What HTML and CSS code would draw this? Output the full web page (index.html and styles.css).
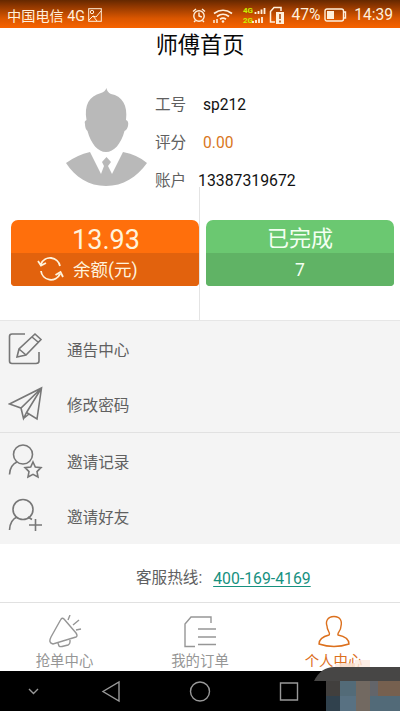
FILE: index.html
```html
<!DOCTYPE html>
<html lang="zh-CN">
<head>
<meta charset="utf-8">
<title>师傅首页</title>
<link rel="stylesheet" href="styles.css">
</head>
<body>
<div class="phone">
  <div class="status">
    <span class="carrier">中国电信 4G</span>
    <svg class="picture" width="14" height="14" viewBox="0 0 14 14"><rect x=".7" y=".7" width="12.6" height="12.6"/><circle cx="4" cy="4" r="1.7"/><path d="M1 12 5 8 8 9 13 3M5 8 9 13"/></svg>
    <svg class="signals" width="94" height="22" viewBox="0 0 94 22">
      <g stroke-width="1.4"><circle cx="8" cy="12" r="5.2"/><path d="M8 8.5V12l2.8 1M2 7.5 5 5M14 7.5 11 5M4.5 16.5 3 18M11.5 16.5 13 18"/></g>
      <g><path d="M23 9.5Q32 3 41 9.5M26 12.5Q32 8 38 12.5M29 15.2Q32 13 35 15.2" stroke-width="1.7"/><circle class="solid" cx="32" cy="17.5" r="1.3"/><path d="M23 16v3M26 15v4" stroke-width="1.5"/></g>
      <text x="52" y="9">4G</text><text x="52" y="18.500">2G</text>
      <path d="M64.500 10V8M67.500 10V7M70.500 10V5.500M73.500 10V4M62 19V17M65 19V16M68 19V14.500M71 19V13" stroke-width="1.8"/>
      <path d="M90 7V3.500H83L79.500 7.500V18H84" stroke-width="1.5"/><rect class="solid" x="85" y="8" width="8" height="12"/><path class="mark" d="M89 10v5M89 16.500v2"/>
    </svg>
    <span class="percent">47%</span>
    <svg class="battery" width="23" height="14" viewBox="0 0 23 14"><rect x="1" y="1" width="18.500" height="12" rx="2"/><path d="M20 4h1.500v6H20"/><rect class="solid" x="3" y="3" width="7" height="8"/></svg>
    <span class="clock">14:39</span>
  </div>

  <h1>师傅首页</h1>

  <section class="profile">
    <svg class="avatar" width="84" height="99" viewBox="0 0 84 99"><path d="M36 5Q40 4 41.500 0Q42 4 46 6C57 8 63 17 61 32Q64 33 63 38Q62 42 59.500 43C56 56 49 64 41 64S26 56 22.500 43Q20 41 20 36Q19 33 21.500 32C19 17 24 8 36 5ZM25 64 36 86 39 78 37 74 41.500 69 46 74 43 78 47 86 58 64Q73 67 82 75C72 89 58 98 41 98S10 89 1 75Q12 67 25 64Z"/></svg>
    <dl>
      <div class="fact"><dt>工号</dt><dd>sp212</dd></div>
      <div class="fact"><dt>评分</dt><dd class="score">0.00</dd></div>
      <div class="fact account"><dt>账户</dt><dd>13387319672</dd></div>
    </dl>
  </section>

  <section class="totals">
    <div class="half left">
      <div class="card balance">
        <strong>13.93</strong>
        <div class="sub"><svg width="27" height="24" viewBox="0 0 27 24"><path d="M23 9A10 10 0 0 0 4 7M1 4 4 8.500 9 6M4 14A10 10 0 0 0 23 17M18.500 18 23.500 15 26 20"/></svg><span>余额(元)</span></div>
      </div>
    </div>
    <div class="half right">
      <div class="card done"><strong>已完成</strong><div class="sub"><span>7</span></div></div>
    </div>
  </section>

  <nav class="menu">
    <a><svg width="36" height="36" viewBox="0 0 36 36"><path d="M17 3H4Q1.500 3 1.500 5.500V30Q1.500 32.500 4 32.500H28Q31 32.500 31 30V21M9 26 11 18 27 3 33 8.500 18 24ZM11 18 18 24M24 6 30 11"/></svg><span>通告中心</span></a>
    <a><svg width="36" height="36" viewBox="0 0 36 36"><path d="M1.500 18 33.500 2 29 33 18.500 26.500 33.500 2 13 22ZM13 22 15.500 32.500 18.500 26.500M15.500 32.500 21 28"/></svg><span>修改密码</span></a>
    <a class="ruled"><svg width="36" height="36" viewBox="0 0 36 36"><circle cx="15" cy="11.500" r="9.500"/><path d="M1.500 31.500Q2 22 9 19M25 19 27.300 24 33 24.600 29 28.600 30 34 25 31.300 20 34 21 28.600 17 24.600 22.700 24Z"/></svg><span>邀请记录</span></a>
    <a><svg width="36" height="36" viewBox="0 0 36 36"><circle cx="15" cy="11.500" r="10"/><path d="M1.500 32Q2 22 9 19M20 19 24 21.500M21 27H34M27.500 21V33"/></svg><span>邀请好友</span></a>
  </nav>

  <div class="hotline"><span>客服热线:</span><a>400-169-4169</a></div>

  <nav class="tabs">
    <a><svg width="36" height="34" viewBox="0 0 36 34"><path d="M17 4Q15 2 13.500 5L4 22Q1 28 6 29L29 22Q31 21 29 18ZM11 28 12 31Q13 32 15 31.500L21 30Q23 29 23 27V25M21 5 23 0M26 10 32 5M29 15 34 14"/></svg><span>抢单中心</span></a>
    <a><svg width="36" height="34" viewBox="0 0 36 34"><path d="M13 31.500H3V9L9 2H29V8M16 14H34M16 22H34M16 29.500H34"/></svg><span>我的订单</span></a>
    <a class="active"><svg width="36" height="34" viewBox="0 0 36 34"><path d="M18 1.500C11 1.500 9.500 7 11 11C11 16 15 18 13 20C9 21 3 23 3 29Q18 34 33 29C33 23 27 21 22 20C21 18 25 16 25 11C26 7 25 1.500 18 1.500Z"/></svg><span>个人中心</span></a>
  </nav>

  <div class="system">
    <svg width="400" height="40" viewBox="0 0 400 40"><path d="M29 18 33.500 22.500 38 18"/><path d="M119 11V30L103 20.500Z"/><circle cx="200" cy="20.500" r="9.500"/><path d="M280.500 12H297.500V29H280.500Z"/></svg>
  </div>
  <svg class="mosaic" width="92" height="51" viewBox="0 0 92 51" shape-rendering="crispEdges">
    <path fill="#fbe8dd" fill-opacity=".8" d="M27 4H47V0H62V7H27Z"/><path fill="#f6d9c4" fill-opacity=".7" d="M32 3H47V7H32Z"/>
    <path fill="#474645" d="M6 21Q13 7 26 7H92V21Z" shape-rendering="auto"/>
    <path fill="#413f3d" d="M18 21H32V36H18Z"/><path fill="#536b78" d="M32 21H48V36H32Z"/><path fill="#726961" d="M48 21H62V51H48Z"/><path fill="#76604f" d="M62 21H92V36H62Z"/>
    <path fill="#30414d" d="M18 36H32V51H18Z"/><path fill="#587182" d="M32 36H48V51H32Z"/><path fill="#526a78" d="M62 36H92V51H62Z"/><path fill="#63656a" d="M62 21H70V36H62Z"/>
  </svg>
</div>
</body>
</html>
```
FILE: styles.css
```css
* { box-sizing: border-box; }
body { margin: 0; background: #fff; }
.phone { position: relative; width: 400px; height: 711px; overflow: hidden; font-family: Roboto, "Noto Sans CJK SC", sans-serif; font-size: 15.6px; color: #606060; }
svg { display: block; flex: none; fill: none; stroke: currentColor; }
span, strong, dt, dd, h1, a { white-space: nowrap; }

.status { display: flex; align-items: center; height: 28px; padding: 1px 7px 0; color: #fff0dc; background: linear-gradient(#652800 0%, #8f3700 22%, #d95600 65%, #f76300 100%); font-size: 14.2px; }
.carrier { width: 82px; }
.signals { margin-left: 89px; }
.status .solid { fill: currentColor; stroke: none; }
.signals text { fill: #c9f000; stroke: none; font-size: 8px; font-weight: 700; }
.signals .mark { stroke: #a84200; stroke-width: 1.5; }
.percent { width: 30px; margin-left: 6px; font-size: 15.6px; }
.battery { margin-left: 3px; stroke-width: 1.4; }
.clock { margin-left: 7px; font-size: 15.6px; }

h1 { height: 32px; margin: 0; color: #080808; font-size: 22.2px; font-weight: 400; line-height: 34px; text-align: center; }

.profile { display: flex; height: 127px; padding: 26px 0 0 65px; }
.avatar { margin-top: 2px; fill: #b9b9b9; stroke: none; }
dl { margin: 0 0 0 6px; }
.fact { display: flex; height: 38px; line-height: 38px; }
dt { width: 48px; }
dd { margin: 0; color: #111; }
.score { color: #d97722; }
.account dt { width: 43px; }
.account dd { font-size: 15.8px; }

.totals { display: flex; height: 133px; }
.half { width: 200px; padding-top: 33px; }
.left { padding-left: 11px; border-right: 1px solid #e4e4e4; }
.right { padding-left: 6px; }
.card { width: 188px; height: 66px; overflow: hidden; border-radius: 7px 7px 4px 4px; color: #fff3dc; text-align: center; }
.card strong { display: block; height: 33px; font-size: 27px; font-weight: 400; line-height: 41px; }
.balance { background: #ff6f0c; }
.balance strong { padding-left: 2px; }
.sub { display: flex; align-items: center; justify-content: center; height: 33px; font-size: 17.5px; }
.balance .sub { justify-content: flex-start; gap: 9px; padding: 0 0 2px 26px; background: #e2620d; }
.sub svg { stroke-width: 1.8; }
.done { color: #f4fff2; background: #6bc871; }
.done strong { font-size: 22px; line-height: 37px; }
.done .sub { background: #60b365; }

.menu { height: 224px; border-top: 1px solid #e6e6e6; background: #f4f4f4; }
.menu a { display: flex; align-items: center; gap: 23px; height: 56px; padding: 0 0 1px 8px; }
.menu svg { stroke: #777; stroke-width: 1.6; }
.menu a + a { height: 55px; }
.menu .ruled { border-top: 1px solid #e1e1e1; }
.menu a.ruled { height: 57px; }

.hotline { display: flex; gap: 11px; height: 58px; padding: 10px 0 0 136px; line-height: 49px; }
.hotline a { color: #17917f; font-size: 15.8px; text-decoration: underline; text-underline-offset: 2px; }

.tabs { display: grid; grid-template-columns: 129px 142px 125px; height: 69px; padding-top: 12px; border-top: 1px solid #e1e1e1; color: #969696; font-size: 14.4px; }
.tabs a { display: flex; flex-direction: column; align-items: center; line-height: 26px; }
.tabs svg { stroke-width: 1.4; }
.tabs .active { color: #dc701d; }

.system { height: 40px; color: #999; background: #000; }
.system svg { stroke-width: 1.4; }
.mosaic { position: absolute; left: 308px; top: 660px; stroke: none; }
```
